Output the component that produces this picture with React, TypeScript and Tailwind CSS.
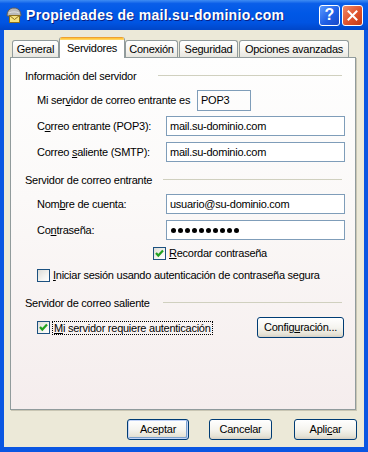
import React from 'react'

function Check() {
  return (
    <svg width="9" height="9" viewBox="0 0 9 9">
      <polyline points="1,4 3.3,6.6 8,1.6" fill="none" stroke="#21a121" strokeWidth="2.2" />
    </svg>
  )
}

function Checkbox({ checked }: { checked?: boolean }) {
  return (
    <div className="w-[13px] h-[13px] shrink-0 border border-[#1c5180] bg-[linear-gradient(135deg,#dcdcd7,#f4f4f0_60%,#ffffff)] flex items-center justify-center">
      {checked && <Check />}
    </div>
  )
}

function Field({ children }: { children: React.ReactNode }) {
  return (
    <div className="w-[179px] h-[20px] border border-[#7f9db9] bg-white pl-[3px] flex items-center leading-[13px]">
      {children}
    </div>
  )
}

function Header({ text, w }: { text: string; w: string }) {
  return (
    <div className="flex items-center pl-[14px] pr-[13px] h-[13px] leading-[13px]">
      <span className={w}>{text}</span>
      <div className="flex-1 h-px bg-[#d0d0bf] -mt-[2px]" />
    </div>
  )
}

function XpButton({ children, def, w }: { children: React.ReactNode; def?: boolean; w: string }) {
  return (
    <div
      className={`${w} h-[21px] rounded-[3px] border border-[#003c74] bg-[linear-gradient(to_bottom,#ffffff,#f5f4ef_50%,#e6e3d6_85%,#d6d0c5)] flex items-center justify-center leading-[13px] ${
        def ? 'shadow-[inset_0_0_0_1px_#c3d4f7,inset_-1px_-1px_0_1px_#7da2ce]' : ''
      }`}
    >
      {children}
    </div>
  )
}

function Tab({ label, w, active, gap }: { label: string; w: string; active?: boolean; gap?: boolean }) {
  if (active) {
    return (
      <div className={`${w} h-[21px] relative z-10 flex flex-col bg-white border-x border-[#919b9c] rounded-t-[3px] overflow-hidden`}>
        <div className="h-[3px] bg-[linear-gradient(to_bottom,#e68b2c,#ffc73c_50%,#ffd97a)]" />
        <div className="flex-1 flex items-center justify-center pb-[2px] leading-[13px]">{label}</div>
      </div>
    )
  }
  return (
    <div
      className={`${w} ${gap ? 'ml-px' : ''} h-[17px] mb-px flex items-center justify-center border border-b-0 border-[#919b9c] rounded-t-[3px] bg-[linear-gradient(to_bottom,#ffffff,#f4f3ef_60%,#e7e6df)] leading-[13px] pt-px`}
    >
      {label}
    </div>
  )
}

export default function App() {
  return (
    <div className="w-[368px] h-[452px] flex flex-col bg-[#0a56e2] text-[11px] tracking-[-0.25px] whitespace-nowrap text-black font-['Liberation_Sans',Arial,sans-serif] overflow-hidden">
      {/* Title bar */}
      <div className="h-[30px] shrink-0 flex items-center pl-[5px] pr-[5px] bg-[linear-gradient(to_bottom,#3f8cf3,#0a5ee9_12%,#0058e6_45%,#0054e2_75%,#0046c8)]">
        <svg width="18" height="18" viewBox="0 0 18 18" className="shrink-0">
          <path d="M2 10 C2 4.5 5 2 9 2 C13 2 16 4.5 16 10 Z" fill="#b9b9b9" stroke="#5a5a5a" strokeWidth="1" />
          <path d="M4 7 C6 5.5 12 5.5 14 7" fill="none" stroke="#e0e0e0" strokeWidth="1" />
          <rect x="4.5" y="9.5" width="10" height="7" fill="#f6e27e" stroke="#8b6f1c" strokeWidth="1" />
          <polyline points="4.5,9.5 9.5,13.5 14.5,9.5" fill="none" stroke="#8b6f1c" strokeWidth="1" />
        </svg>
        <span className="ml-[3px] text-white font-bold text-[14px] tracking-[0.3px] leading-[16px] [text-shadow:1px_1px_#0a1e82]">
          Propiedades de mail.su-dominio.com
        </span>
        <div className="ml-auto flex gap-[2px] tracking-normal">
          <div className="w-[21px] h-[21px] rounded-[3px] border border-white bg-[linear-gradient(135deg,#5b9aff,#1f5fe6_55%,#1848c7)] flex items-center justify-center text-white font-bold text-[16px] leading-[16px]">
            ?
          </div>
          <div className="w-[21px] h-[21px] rounded-[3px] border border-white bg-[linear-gradient(135deg,#f08a6a,#e0522b_55%,#c23a17)] flex items-center justify-center">
            <svg width="11" height="11" viewBox="0 0 11 11">
              <path d="M1.5 1.5 L9.5 9.5 M9.5 1.5 L1.5 9.5" stroke="white" strokeWidth="2" strokeLinecap="square" />
            </svg>
          </div>
        </div>
      </div>

      {/* Body */}
      <div className="flex-1 mx-[4px] mb-[5px] bg-[#ece9d8] flex flex-col pt-[7px]">
        {/* Tabs */}
        <div className="flex items-end h-[21px] ml-[8px]">
          <Tab label="General" w="w-[47px]" />
          <Tab label="Servidores" w="w-[66px]" active />
          <Tab label="Conexión" w="w-[53px]" />
          <Tab label="Seguridad" w="w-[59px]" gap />
          <Tab label="Opciones avanzadas" w="w-[110px]" gap />
        </div>

        {/* Panel */}
        <div className="-mt-px ml-[6px] w-[346px] h-[353px] border border-[#919b9c] shadow-[1px_1px_0_#c9c6b4] bg-[linear-gradient(to_bottom,#fefefe,#fbf9f8_40%,#f5eded)] flex flex-col">
          <div className="mt-[12px]">
            <Header text="Información del servidor" w="w-[133px]" />
          </div>

          <div className="mt-[7px] h-[21px] flex items-center pl-[26px]">
            <span className="w-[160px]">
              Mi ser<u>v</u>idor de correo entrante es
            </span>
            <div className="w-[54px] h-[21px] border border-[#7f9db9] pl-[3px] flex items-center">POP3</div>
          </div>

          <div className="mt-[5px] flex items-center pl-[26px]">
            <span className="w-[129px]">
              C<u>o</u>rreo entrante (POP3):
            </span>
            <Field>mail.su-dominio.com</Field>
          </div>
          <div className="mt-[6px] flex items-center pl-[26px]">
            <span className="w-[129px]">
              Correo <u>s</u>aliente (SMTP):
            </span>
            <Field>mail.su-dominio.com</Field>
          </div>

          <div className="mt-[12px]">
            <Header text="Servidor de correo entrante" w="w-[138px]" />
          </div>

          <div className="mt-[7px] flex items-center pl-[26px]">
            <span className="w-[129px]">
              Nom<u>b</u>re de cuenta:
            </span>
            <Field>usuario@su-dominio.com</Field>
          </div>
          <div className="mt-[6px] flex items-center pl-[26px]">
            <span className="w-[129px]">
              Co<u>n</u>traseña:
            </span>
            <Field>
              <div className="flex gap-[2px] pl-px">
                {Array.from({ length: 10 }).map((_, i) => (
                  <div key={i} className="w-[5px] h-[5px] rounded-full bg-black" />
                ))}
              </div>
            </Field>
          </div>

          <div className="mt-[7px] h-[13px] flex items-center pl-[142px] gap-[3px] leading-[13px]">
            <Checkbox checked />
            <span>
              <u>R</u>ecordar contraseña
            </span>
          </div>
          <div className="mt-[9px] h-[13px] flex items-center pl-[26px] gap-[3px] leading-[13px]">
            <Checkbox />
            <span>
              <u>I</u>niciar sesión usando autenticación de contraseña segura
            </span>
          </div>

          <div className="mt-[15px]">
            <Header text="Servidor de correo saliente" w="w-[138px]" />
          </div>

          <div className="mt-[7px] h-[21px] flex items-center pl-[26px] pr-[11px]">
            <Checkbox checked />
            <span className="ml-[2px] border border-dotted border-black px-px leading-[12px]">
              <u>M</u>i servidor requiere autenticación
            </span>
            <div className="ml-auto">
              <XpButton w="w-[87px]">
                Config<u>u</u>ración...
              </XpButton>
            </div>
          </div>
        </div>

        {/* Buttons */}
        <div className="mt-[9px] flex justify-end pr-[7px]">
          <XpButton w="w-[62px]" def>
            Aceptar
          </XpButton>
          <div className="ml-[20px]">
            <XpButton w="w-[63px]">Cancelar</XpButton>
          </div>
          <div className="ml-[22px]">
            <XpButton w="w-[63px]">
              Apli<u>c</u>ar
            </XpButton>
          </div>
        </div>
      </div>
    </div>
  )
}
